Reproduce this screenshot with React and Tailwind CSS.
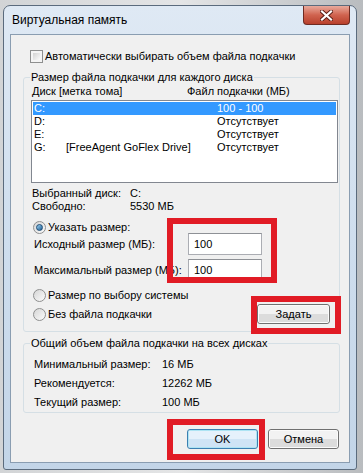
import React from "react";

const FONT = "font-['Liberation_Sans',Arial,sans-serif]";

function Checkbox() {
  return (
    <span className="w-[13px] h-[13px] border border-[#8e8f8f] bg-[#f4f4f4] p-[2px] shrink-0 flex">
      <span className="flex-1 bg-gradient-to-br from-[#d2d2d2] to-[#fafafa]" />
    </span>
  );
}

function Radio({ checked }) {
  return (
    <span className="w-[13px] h-[13px] rounded-full border border-[#8e8f8f] bg-gradient-to-br from-[#d6d6d6] to-[#fbfbfb] shrink-0 flex items-center justify-center">
      {checked && (
        <span className="w-[7px] h-[7px] rounded-full border border-[#1c4b74] bg-gradient-to-br from-[#9cd4f5] to-[#1f5f93]" />
      )}
    </span>
  );
}

function Button({ children, isDefault, className = "" }) {
  return (
    <div
      className={`h-[20px] w-[71px] rounded-[3px] border ${
        isDefault ? "border-[#3c7fb1]" : "border-[#707070]"
      } flex flex-col overflow-hidden ${className}`}
    >
      <div className={`flex-1 flex flex-col rounded-[2px] border ${isDefault ? "border-[#48d3f7]/40" : "border-white/70"} relative`}>
        <div className={`h-1/2 ${isDefault ? "bg-[#e5f1fb]" : "bg-[#f2f2f2]"}`} />
        <div className={`h-1/2 ${isDefault ? "bg-[#cfe4f5]" : "bg-[#dcdcdc]"}`} />
        <span className="absolute inset-0 flex items-center justify-center leading-none text-[11px] text-black">
          {children}
        </span>
      </div>
    </div>
  );
}

function Field({ value }) {
  return (
    <div className="w-[74px] h-[22px] bg-white border border-[#abadb3] border-t-[#8e9196] flex items-center pl-[5px]">
      {value}
    </div>
  );
}

function Group({ title, children, className = "" }) {
  return (
    <fieldset className={`ml-[12px] w-[317px] border border-[#d5dfe5] rounded-[3px] pl-[7px] pr-[1px] ${className}`}>
      <legend className="-ml-[1px] px-[1px] leading-[14px] h-[14px]">{title}</legend>
      {children}
    </fieldset>
  );
}

const drives = [
  { letter: "C:", label: "", size: "100 - 100", selected: true },
  { letter: "D:", label: "", size: "Отсутствует" },
  { letter: "E:", label: "", size: "Отсутствует" },
  { letter: "G:", label: "[FreeAgent GoFlex Drive]", size: "Отсутствует" },
];

function RedBox({ className }) {
  return <div className={`absolute border-[6px] border-[#e11b25] ${className}`} />;
}

export default function App() {
  return (
    <div className={`relative w-[363px] h-[473px] overflow-hidden bg-gradient-to-r from-[#d2d4d6] via-[#e4e5e6] to-[#b9bcbf] pt-[5px] pl-[3px] text-black ${FONT}`}>
      <div className="w-[354px] h-[465px] rounded-t-[7px] rounded-b-[3px] border border-[#5b6b7d] bg-gradient-to-b from-[#dfe9f4] via-[#cfdeee] to-[#c3d5e8] flex flex-col">
        {/* title bar */}
        <div className="h-[28px] flex items-start shrink-0">
          <span className="pl-[8px] pt-[7px] text-[12px] leading-[14px]">Виртуальная память</span>
          <div className="ml-auto mr-[6px] w-[47px] h-[19px] rounded-b-[4px] border border-t-0 border-[#6e2b22] bg-gradient-to-b from-[#e8a99c] via-[#d0634f] to-[#b8402c] flex items-center justify-center">
            <svg width="13" height="11" viewBox="0 0 13 11">
              <path d="M2 1.5 L11 9.5 M11 1.5 L2 9.5" stroke="#5a1d14" strokeWidth="4" strokeLinecap="square" />
              <path d="M2 1.5 L11 9.5 M11 1.5 L2 9.5" stroke="#ffffff" strokeWidth="2.2" strokeLinecap="square" />
            </svg>
          </div>
        </div>

        {/* client area */}
        <div className="mx-[6px] mb-[6px] flex-1 bg-[#f0f0f0] border border-[#8a9db1] flex flex-col text-[11px] whitespace-nowrap">
          <div className="mt-[14px] h-[14px] pl-[19px] flex items-center gap-[2px]">
            <Checkbox />
            <span className="leading-[14px]">Автоматически выбирать объем файла подкачки</span>
          </div>

          <Group title="Размер файла подкачки для каждого диска" className="mt-[7px] pb-[7px]">
            <div className="h-[14px] flex items-center pl-[1px] leading-[14px]">
              <span className="w-[155px]">Диск [метка тома]</span>
              <span>Файл подкачки (МБ)</span>
            </div>

            <div className="mt-[2px] w-[307px] h-[83px] bg-white border border-[#828790] pt-[1px]">
              {drives.map((d) => (
                <div
                  key={d.letter}
                  className={`mx-[1px] h-[13px] flex items-center pl-[1px] leading-[13px] ${
                    d.selected ? "bg-[#3399ff] text-white" : ""
                  }`}
                >
                  <span className="w-[32px]">{d.letter}</span>
                  <span className="w-[151px]">{d.label}</span>
                  <span>{d.size}</span>
                </div>
              ))}
            </div>

            <div className="mt-[4px] pl-[1px] leading-[13px]">
              <div className="h-[13px] flex">
                <span className="w-[98px]">Выбранный диск:</span>
                <span>C:</span>
              </div>
              <div className="h-[13px] flex">
                <span className="w-[98px]">Свободно:</span>
                <span>5530 МБ</span>
              </div>
            </div>

            <div className="mt-[8px] h-[12px] pl-[2px] flex items-center gap-[2px]">
              <Radio checked />
              <span className="leading-[14px]">Указать размер:</span>
            </div>

            <div className="h-[22px] flex items-center">
              <span className="w-[157px] pl-[3px]">Исходный размер (МБ):</span>
              <Field value="100" />
            </div>
            <div className="mt-[4px] h-[22px] flex items-center">
              <span className="w-[157px] pl-[3px]">Максимальный размер (МБ):</span>
              <Field value="100" />
            </div>

            <div className="mt-[7px] h-[14px] pl-[2px] flex items-center gap-[2px]">
              <Radio />
              <span className="leading-[14px]">Размер по выбору системы</span>
            </div>
            <div className="mt-[2px] h-[20px] pl-[2px] pr-[8px] flex items-center gap-[2px]">
              <Radio />
              <span className="leading-[14px]">Без файла подкачки</span>
              <Button className="ml-auto w-[73px]">Задать</Button>
            </div>
          </Group>

          <Group title="Общий объем файла подкачки на всех дисках" className="mt-[4px]">
            <div className="pt-[5px] pl-[3px]">
              {[
                ["Минимальный размер:", "16 МБ"],
                ["Рекомендуется:", "12262 МБ"],
                ["Текущий размер:", "100 МБ"],
              ].map(([k, v]) => (
                <div key={k} className="h-[19px] flex items-center">
                  <span className="w-[128px]">{k}</span>
                  <span>{v}</span>
                </div>
              ))}
            </div>
          </Group>

          <div className="mt-[16px] mr-[10px] flex justify-end gap-[10px]">
            <Button isDefault>OK</Button>
            <Button>Отмена</Button>
          </div>
        </div>
      </div>

      <RedBox className="left-[167px] top-[218px] w-[110px] h-[65px]" />
      <RedBox className="left-[251px] top-[296px] w-[90px] h-[38px]" />
      <RedBox className="left-[167px] top-[419px] w-[98px] h-[41px]" />
    </div>
  );
}
